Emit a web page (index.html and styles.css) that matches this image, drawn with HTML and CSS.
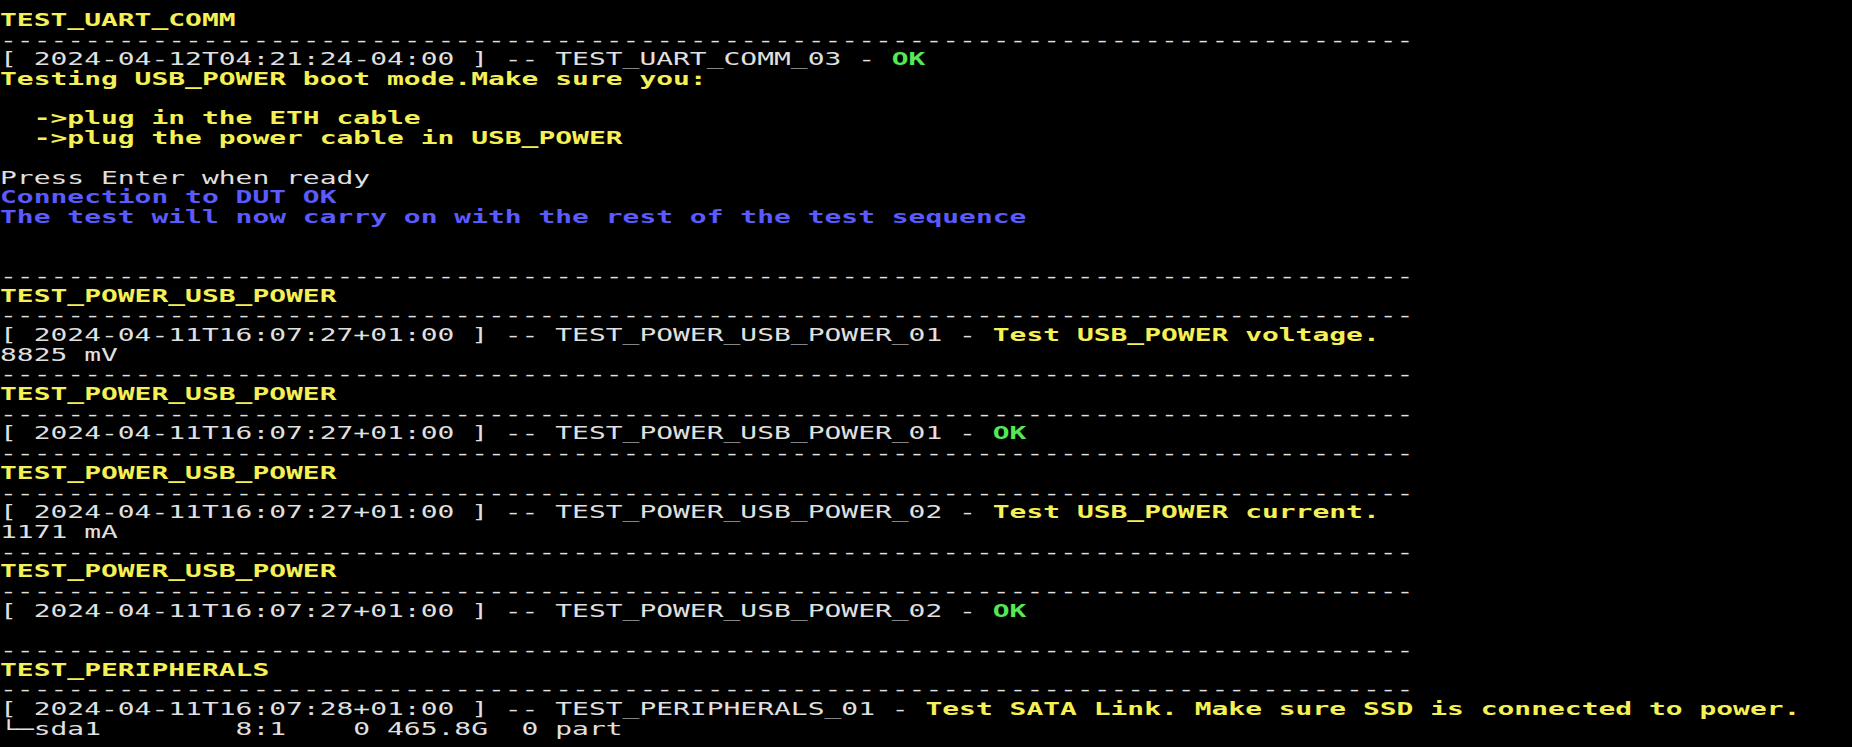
FILE: index.html
```html
<!DOCTYPE html>
<html>
<head>
<meta charset="utf-8">
<link rel="stylesheet" href="styles.css">
</head>
<body>
<div class="screen">
<div class="term">
<div class="ln y b">TEST_UART_COMM</div>
<div class="ln">------------------------------------------------------------------------------------</div>
<div class="ln">[ 2024-04-12T04:21:24-04:00 ] -- TEST_UART_COMM_03 - <span class="g b">OK</span></div>
<div class="ln y b">Testing USB_POWER boot mode.Make sure you:</div>
<div class="ln"> </div>
<div class="ln y b">  -&gt;plug in the ETH cable</div>
<div class="ln y b">  -&gt;plug the power cable in USB_POWER</div>
<div class="ln"> </div>
<div class="ln">Press Enter when ready</div>
<div class="ln bl b">Connection to DUT OK</div>
<div class="ln bl b">The test will now carry on with the rest of the test sequence</div>
<div class="ln"> </div>
<div class="ln"> </div>
<div class="ln">------------------------------------------------------------------------------------</div>
<div class="ln y b">TEST_POWER_USB_POWER</div>
<div class="ln">------------------------------------------------------------------------------------</div>
<div class="ln">[ 2024-04-11T16:07:27+01:00 ] -- TEST_POWER_USB_POWER_01 - <span class="y b">Test USB_POWER voltage.</span></div>
<div class="ln">8825 mV</div>
<div class="ln">------------------------------------------------------------------------------------</div>
<div class="ln y b">TEST_POWER_USB_POWER</div>
<div class="ln">------------------------------------------------------------------------------------</div>
<div class="ln">[ 2024-04-11T16:07:27+01:00 ] -- TEST_POWER_USB_POWER_01 - <span class="g b">OK</span></div>
<div class="ln">------------------------------------------------------------------------------------</div>
<div class="ln y b">TEST_POWER_USB_POWER</div>
<div class="ln">------------------------------------------------------------------------------------</div>
<div class="ln">[ 2024-04-11T16:07:27+01:00 ] -- TEST_POWER_USB_POWER_02 - <span class="y b">Test USB_POWER current.</span></div>
<div class="ln">1171 mA</div>
<div class="ln">------------------------------------------------------------------------------------</div>
<div class="ln y b">TEST_POWER_USB_POWER</div>
<div class="ln">------------------------------------------------------------------------------------</div>
<div class="ln">[ 2024-04-11T16:07:27+01:00 ] -- TEST_POWER_USB_POWER_02 - <span class="g b">OK</span></div>
<div class="ln"> </div>
<div class="ln">------------------------------------------------------------------------------------</div>
<div class="ln y b">TEST_PERIPHERALS</div>
<div class="ln">------------------------------------------------------------------------------------</div>
<div class="ln">[ 2024-04-11T16:07:28+01:00 ] -- TEST_PERIPHERALS_01 - <span class="y b">Test SATA Link. Make sure SSD is connected to power.</span></div>
<div class="ln">└─sda1        8:1    0 465.8G  0 part</div>
</div>
</div>
</body>
</html>
```
FILE: styles.css
```css
html, body {
  margin: 0;
  padding: 0;
  background: #000;
  height: 100%;
  overflow: hidden;
}
.screen {
  padding-top: 11px;
}
.term {
  width: 1120px;
  font-family: "DejaVu Sans Mono", monospace;
  font-size: 17px;
  line-height: 19.7px;
  color: #e0e0e0;
  transform: scaleX(1.644);
  transform-origin: 0 0;
}
.ln {
  height: 19.7px;
  white-space: pre;
}
.b { font-weight: bold; }
.y { color: #f5f055; }
.g { color: #55e855; }
.bl { color: #5a5aff; }
```
